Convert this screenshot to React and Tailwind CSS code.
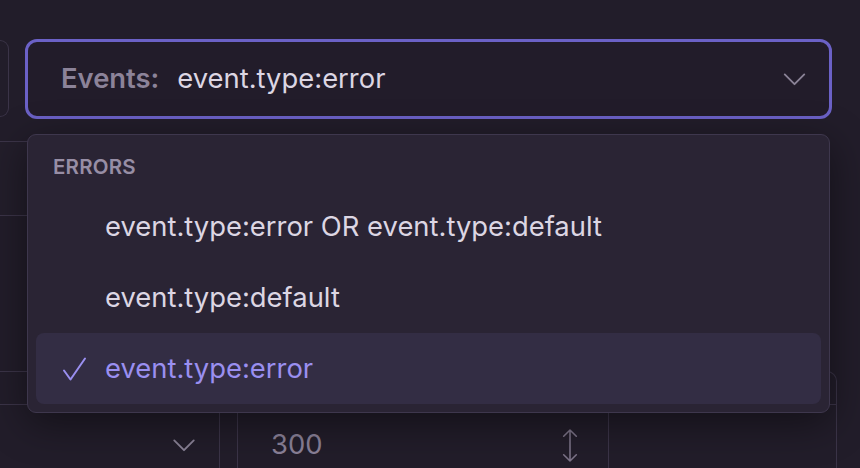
import React from 'react';

const font = { fontFamily: 'Inter, "Noto Sans", sans-serif' };

const Chevron = ({ className }) => (
  <svg viewBox="0 0 24 14" className={className} fill="none" stroke="currentColor" strokeWidth="2" strokeLinecap="round" strokeLinejoin="round">
    <path d="M1.5 1.5 12 12 22.5 1.5" />
  </svg>
);

const Check = () => (
  <svg viewBox="0 0 24 24" className="w-[25px] h-[24px] text-[#9a8ff0]" fill="none" stroke="currentColor" strokeWidth="2" strokeLinecap="round" strokeLinejoin="round">
    <path d="M1.5 13.5 8 22.5 22.5 1.5" />
  </svg>
);

const UpDown = () => (
  <svg viewBox="0 0 16 34" className="w-[16px] h-[33px] text-[#7d7489]" fill="none" stroke="currentColor" strokeWidth="1.6" strokeLinecap="round" strokeLinejoin="round">
    <path d="M8 1v32M1.5 7.5 8 1l6.5 6.5M1.5 26.5 8 33l6.5-6.5" />
  </svg>
);

const options = [
  { label: 'event.type:error OR event.type:default' },
  { label: 'event.type:default' },
  { label: 'event.type:error', selected: true },
];

const OptionRow = ({ label, selected }) => (
  <div
    className={`flex items-center h-[71px] rounded-[8px] ${
      selected ? 'bg-[#332d44] text-[#9a8ff0]' : 'text-[#dcd6e3]'
    }`}
  >
    <div className="w-[69px] flex justify-end pr-[18px]">{selected && <Check />}</div>
    <span className="text-[27.4px] leading-none">{label}</span>
  </div>
);

export default function App() {
  return (
    <div className="relative w-[860px] h-[468px] overflow-hidden bg-[#221d2a]" style={font}>
      {/* form behind the menu */}
      <div className="pt-[39px] flex gap-[16px]">
        <div className="mt-[1px] w-[9px] h-[77px] border border-l-0 border-[#3b3448] rounded-r-[10px]" />
        <div className="w-[807px] h-[80px] border-[3px] border-[#6b61c6] rounded-[12px] bg-[#221c2a] flex items-center pl-[33px] pr-[23px]">
          <span className="text-[27.4px] font-semibold text-[#8c8399]">Events:</span>
          <span className="ml-[18px] text-[27.4px] text-[#dcd6e3]">event.type:error</span>
          <Chevron className="ml-auto w-[23px] h-[13px] text-[#8a8296]" />
        </div>
      </div>

      <div className="mt-[22px] w-[300px] h-[75px] border-y border-[#3b3448] bg-[#231e2b]" />

      <div className="mt-[155px] w-[837px] border border-l-0 border-[#3b3448] rounded-tr-[10px]">
        <div className="h-[33px] border-b border-[#3b3448]" />
        <div className="flex h-[80px]">
          <div className="w-[220px] border-r border-[#3b3448] flex items-center justify-end pr-[23px]">
            <Chevron className="w-[24px] h-[13px] text-[#8a8296]" />
          </div>
          <div className="ml-[17px] w-[372px] border-x border-[#3b3448] flex items-center pl-[33px] pr-[30px]">
            <span className="text-[27.4px] text-[#8a8198]">300</span>
            <div className="ml-auto"><UpDown /></div>
          </div>
        </div>
      </div>

      {/* dropdown menu */}
      <div className="absolute left-[27px] top-[134px] w-[803px] h-[279px] bg-[#2a2434] border border-[#3e374d] rounded-[9px] shadow-[0_10px_40px_rgba(0,0,0,0.45)] px-[8px]">
        <div className="h-[56px] flex items-center pl-[17px] pt-[8px]">
          <span className="text-[20.5px] font-semibold tracking-[0.01em] text-[#978ea5]">ERRORS</span>
        </div>
        {options.map((o) => (
          <OptionRow key={o.label} {...o} />
        ))}
      </div>
    </div>
  );
}
